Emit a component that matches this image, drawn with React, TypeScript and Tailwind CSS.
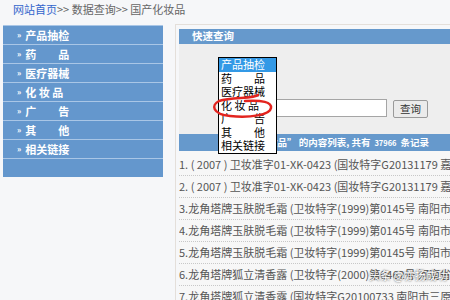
const MENU = ['产品抽检', '药　　品', '医疗器械', '化 妆 品', '广　　告', '其　　他', '相关链接'];

const OPTIONS = ['产品抽检', '药　　品', '医疗器械', '化 妆 品', '广　　告', '其　　他', '相关链接'];

const ROWS = [
  '1. ( 2007 ) 卫妆准字01-XK-0423 (国妆特字G20131179 嘉兴市美丽日用化妆品有限公司)',
  '2. ( 2007 ) 卫妆准字01-XK-0423 (国妆特字G20131179 嘉兴市美丽日用化妆品有限公司)',
  '3.龙角塔牌玉肤脱毛霜 (卫妆特字(1999)第0145号 南阳市宛城区化妆品厂)',
  '4.龙角塔牌玉肤脱毛霜 (卫妆特字(1999)第0145号 南阳市宛城区化妆品厂)',
  '5.龙角塔牌玉肤脱毛霜 (卫妆特字(1999)第0145号 南阳市宛城区化妆品厂)',
  '6.龙角塔牌狐立清香露 (卫妆特字(2000)第0462号 河南省南阳市化妆品厂)',
  '7.龙角塔牌狐立清香露 (国妆特字G20100733 南阳市三原区化妆品厂)',
];

function SideMenu() {
  return (
    <aside className="w-[160px] ml-[3px] mt-[1px]">
      {MENU.map(label => (
        <div
          key={label}
          className="h-[19px] flex items-center pl-[14px] bg-[#6497cd] border-t border-[#a9c6e6] border-b-[#34506f] text-white font-bold text-[11px] leading-none"
        >
          <span className="text-[8px] mr-[4px]">»</span>
          <span className="whitespace-pre">{label}</span>
        </div>
      ))}
      {/* empty tail row */}
      <div className="h-[19px] bg-[#6497cd] border-t border-[#a9c6e6] border-b-[#2c4560]" />
    </aside>
  );
}

function QuickSearch() {
  return (
    <main className="flex-1 ml-[12px] border-t border-l border-[#e4dfda] pt-[4px] pl-[3px] min-w-0">
      <div className="h-[15px] bg-[#6699cc] flex items-center pl-[13px] text-white font-bold text-[10.5px] leading-none">
        快速查询
      </div>
      <div className="h-[90px] bg-[#eeeeee] flex items-start pt-[55px] pl-[97px]">
        <div className="w-[111px] h-[18px] bg-white border border-[#a5a5a5]" />
        <button className="ml-[6px] w-[35px] h-[18px] mt-[1px] bg-[#ebebeb] border border-[#9a9a9a] rounded-[2px] text-[10.5px] leading-none text-[#333]">
          查询
        </button>
      </div>
      <div className="h-[17px] bg-[#6699cc] flex items-center pl-[70px] text-white font-bold text-[9.5px] leading-none whitespace-nowrap">
        “化妆品” 的内容列表, 共有 <span className="text-[7.5px] mx-[4px]">37966</span> 条记录
      </div>
      <div className="pt-[3px] bg-[#f7f7f7]">
        {ROWS.map((row, i) => (
          <div
            key={i}
            className="h-[22px] flex items-center border-b border-dotted border-[#c8c8c8] text-[11px] text-[#555] whitespace-nowrap overflow-hidden"
          >
            {row}
          </div>
        ))}
      </div>
    </main>
  );
}

export default function App() {
  return (
    <div className="relative w-[450px] h-[300px] overflow-hidden bg-[#f6f7f9] font-['Noto_Sans_CJK_SC','Noto_Sans',sans-serif]">
      <div className="h-[24px] pl-[13px] pt-[1px] text-[11px] leading-[16px] text-[#666]">
        <span className="text-[#3366cc]">网站首页</span>&gt;&gt; 数据查询&gt;&gt; 国产化妆品
      </div>
      <div className="flex">
        <SideMenu />
        <QuickSearch />
      </div>

      {/* open select list */}
      <div className="absolute left-[218px] top-[57px] w-[59px] bg-white border border-black text-[11px] text-black">
        {OPTIONS.map((opt, i) => (
          <div
            key={opt}
            className={
              i === 0
                ? 'h-[13.5px] leading-[13.5px] pl-[2px] whitespace-pre bg-[#3399e6] text-white'
                : 'h-[13.5px] leading-[13.5px] pl-[2px] whitespace-pre'
            }
          >
            {opt}
          </div>
        ))}
      </div>

      {/* red hand-drawn mark */}
      <svg className="absolute left-0 top-0 pointer-events-none" width="450" height="300">
        <path
          d="M 258 95 C 254 99, 232 97, 219 101 C 211 105, 212 114, 230 116 C 250 118, 270 115, 271 108 C 272 102, 262 100, 245 101"
          fill="none"
          stroke="#e3241f"
          strokeWidth="2.5"
          strokeLinecap="round"
        />
      </svg>

      {/* watermark */}
      <div className="absolute left-[369px] top-[268px] text-[11px] leading-[14px] text-white whitespace-nowrap [text-shadow:0_0_2px_rgba(0,0,0,0.9)]">
        头条 @亦扬成功
      </div>
    </div>
  );
}
